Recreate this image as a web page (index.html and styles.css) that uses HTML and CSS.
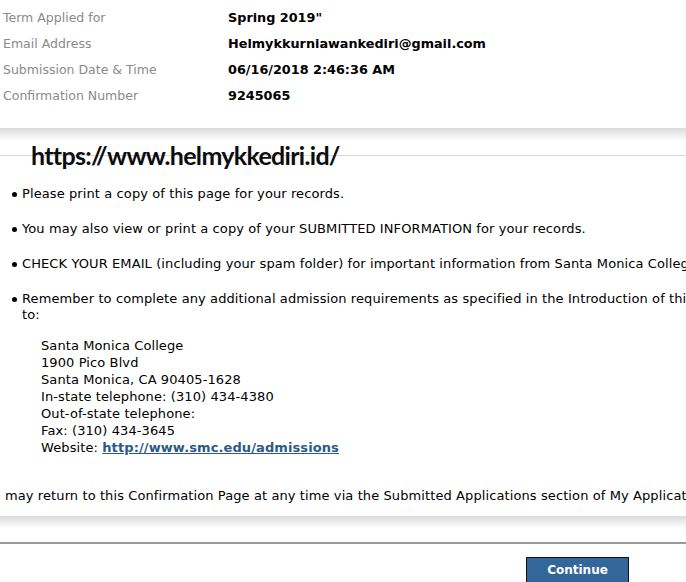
FILE: index.html
```html
<!DOCTYPE html>
<html lang="en">
<head>
    <meta charset="UTF-8">
    <meta name="viewport" content="width=device-width, initial-scale=1.0">
    <title>Application Confirmation</title>
    <link rel="stylesheet" href="styles.css">
</head>
<body>

    <!-- Submission Summary -->
    <div class="summary">
        <table class="summary-table">
            <tr><td class="label">Term Applied for</td><td class="value">Spring 2019"</td></tr>
            <tr><td class="label">Email Address</td><td class="value">Helmykkurniawankediri@gmail.com</td></tr>
            <tr><td class="label">Submission Date &amp; Time</td><td class="value">06/16/2018 2:46:36 AM</td></tr>
            <tr><td class="label">Confirmation Number</td><td class="value">9245065</td></tr>
        </table>
    </div>
    <div class="shadow-band"></div>

    <!-- Instructions -->
    <div class="instructions">
        <div class="watermark">https://www.helmykkediri.id/</div>
        <ul class="notes">
            <li>Please print a copy of this page for your records.</li>
            <li>You may also view or print a copy of your SUBMITTED INFORMATION for your records.</li>
            <li>CHECK YOUR EMAIL (including your spam folder) for important information from Santa Monica College.</li>
            <li>Remember to complete any additional admission requirements as specified in the Introduction of this application and send them<br>to:
                <div class="address">
                    Santa Monica College<br>
                    1900 Pico Blvd<br>
                    Santa Monica, CA 90405-1628<br>
                    In-state telephone: (310) 434-4380<br>
                    Out-of-state telephone:<br>
                    Fax: (310) 434-3645<br>
                    Website: <a href="#">http://www.smc.edu/admissions</a>
                </div>
            </li>
        </ul>
        <p class="return-note">may return to this Confirmation Page at any time via the Submitted Applications section of My Applications.</p>
    </div>
    <div class="shadow-band"></div>

    <!-- Actions -->
    <div class="actions">
        <button class="btn-continue">Continue</button>
    </div>

</body>
</html>
```

FILE: styles.css
```css
/* General Styles */
body {
    font-family: "DejaVu Sans", Verdana, sans-serif;
    font-size: 13px;
    letter-spacing: 0.1px;
    margin: 0;
    padding: 0;
    color: #000;
    background: #fff;
    overflow: hidden;
}

/* Summary */
.summary {
    height: 128px;
    padding-top: 4px;
    box-sizing: border-box;
}

.summary-table {
    border-collapse: collapse;
}

.summary-table td {
    height: 26px;
    padding: 0;
    vertical-align: middle;
}

.summary-table .label {
    color: #8a8a8a;
    font-size: 12.5px;
    letter-spacing: 0;
    width: 225px;
    padding-left: 3px;
}

.summary-table .value {
    font-weight: bold;
    font-size: 12.8px;
    letter-spacing: 0;
}

/* Shadow under a box */
.shadow-band {
    height: 13px;
    background: linear-gradient(#dcdcdc, #fff);
}

/* Instructions */
.instructions {
    position: relative;
    margin-top: 14px;
    border-top: 1px solid #dadada;
    white-space: nowrap;
}

.watermark {
    position: absolute;
    top: -16px;
    left: 31px;
    font-family: Lato, sans-serif;
    font-size: 25px;
    font-weight: bold;
    letter-spacing: -0.7px;
    color: #0d0d0d;
}

.notes {
    list-style: none;
    margin: 0;
    padding: 30px 0 0 22px;
}

.notes li {
    position: relative;
    line-height: 16px;
    margin-bottom: 19px;
}

.notes li::before {
    content: "";
    position: absolute;
    left: -10px;
    top: 6px;
    width: 5px;
    height: 5px;
    border-radius: 50%;
    background: #000;
}

.address {
    margin: 14px 0 0 19px;
    line-height: 17px;
}

.address a {
    color: #2a5a8a;
    font-weight: bold;
    text-decoration: underline;
}

.return-note {
    margin: 32px 0 12px 5px;
    line-height: 16px;
}

/* Actions */
.actions {
    margin-top: 13px;
    border-top: 2px solid #9a9a9a;
    padding: 13px 0 0 526px;
}

.btn-continue {
    width: 103px;
    height: 26px;
    background: #336699;
    border: 1px solid #111;
    color: #fff;
    font-family: "DejaVu Sans", Verdana, sans-serif;
    font-size: 12px;
    font-weight: bold;
    cursor: pointer;
}
```
